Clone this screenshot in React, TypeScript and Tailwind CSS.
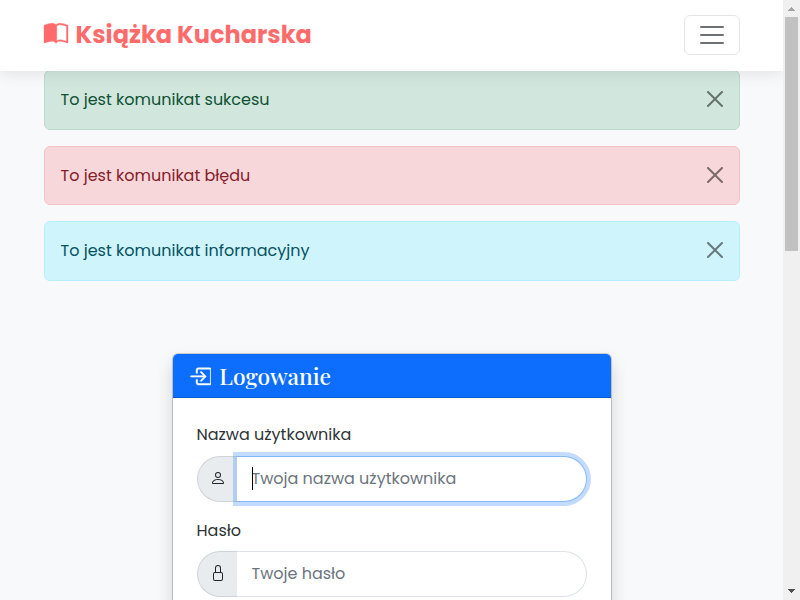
import type { ReactNode } from 'react';
import { BsBookHalf, BsBoxArrowInRight, BsLock, BsPerson } from 'react-icons/bs';

function CloseIcon() {
  return (
    <svg viewBox="0 0 16 16" className="-mt-[2px] h-4 w-4 fill-black opacity-50" aria-label="Zamknij">
      <path d="M.293.293a1 1 0 0 1 1.414 0L8 6.586 14.293.293a1 1 0 1 1 1.414 1.414L9.414 8l6.293 6.293a1 1 0 0 1-1.414 1.414L8 9.414l-6.293 6.293a1 1 0 0 1-1.414-1.414L6.586 8 .293 1.707a1 1 0 0 1 0-1.414z" />
    </svg>
  );
}

function Alert({ tone, children }: { tone: string; children: ReactNode }) {
  return (
    <div className={`mb-4 flex h-[59.6px] items-center justify-between rounded-md border px-4 ${tone}`}>
      <span>{children}</span>
      <CloseIcon />
    </div>
  );
}

function Addon({ children }: { children: ReactNode }) {
  return (
    <span className="flex w-10 shrink-0 items-center justify-center rounded-l-full border border-r-0 border-[#ced4da] bg-[#e9ecef] text-[#212529]">
      {children}
    </span>
  );
}

export default function App() {
  return (
    <div className="flex h-[600px] w-[800px] overflow-hidden bg-[#f8f9fa] font-[Poppins,Inter,sans-serif] text-base leading-[25.6px] text-[#2d3436]">
      <div className="flex w-[783px] flex-col overflow-hidden">
        <header className="relative z-10 flex h-[71px] shrink-0 items-center justify-between bg-white px-[43.5px] pb-[2px] shadow-[0_2px_15px_rgba(0,0,0,0.1)]">
          <div className="flex items-center gap-2 text-2xl font-bold text-[#ff6b6b]">
            <BsBookHalf className="-mt-[2px] h-6 w-6 overflow-visible" strokeWidth="0.25" />
            <span>Książka Kucharska</span>
          </div>
          <button className="flex h-10 w-14 items-center justify-center rounded-md border border-[#e5e5e6]" aria-label="Menu">
            <svg viewBox="0 0 30 30" className="h-[30px] w-[30px]" fill="none" stroke="#212529" strokeOpacity=".65" strokeWidth="2" strokeLinecap="round" strokeMiterlimit="10">
              <path d="M4 7h22M4 15h22M4 23h22" />
            </svg>
          </button>
        </header>
        <main className="-mt-[0.8px] flex flex-col px-[43.5px]">
          <Alert tone="border-[#badbcc] bg-[#d1e7dd] text-[#0f5132]">To jest komunikat sukcesu</Alert>
          <Alert tone="border-[#f5c2c7] bg-[#f8d7da] text-[#842029]">To jest komunikat błędu</Alert>
          <Alert tone="border-[#b6effb] bg-[#cff4fc] text-[#055160]">To jest komunikat informacyjny</Alert>
          <section className="mx-auto mt-14 h-[400px] w-[440px] rounded-md border border-black/[.175] bg-white bg-clip-padding shadow-[0_8px_16px_rgba(0,0,0,0.15)]">
            <div className="flex h-11 items-center gap-2 rounded-t-[5px] border-b border-black/[.175] bg-[#0d6efd] pl-4 text-white">
              <BsBoxArrowInRight className="mt-px h-[22.8px] w-[22.8px]" strokeWidth="0.35" />
              <h1 className="mt-px font-['Playfair_Display','Liberation_Serif',serif] text-[22.8px] font-medium">Logowanie</h1>
            </div>
            <form className="px-6 pt-6">
              <label className="mb-2 block h-[25.6px]">Nazwa użytkownika</label>
              <div className="mb-4 flex h-[46px]">
                <Addon><BsPerson className="ml-px h-4 w-4 -translate-y-px" /></Addon>
                <div className="relative flex flex-1 items-center rounded-r-full border border-l-0 border-[#86b7fe] bg-white pl-[15px] text-[#6c757d] shadow-[0_0_0_4px_rgba(13,110,253,0.25)]">
                  <i className="absolute left-[15px] h-[23px] w-px bg-black" />
                  <span>Twoja nazwa użytkownika</span>
                </div>
              </div>
              <label className="mb-[7.6px] block h-[25.6px]">Hasło</label>
              <div className="flex h-[46px]">
                <Addon><BsLock className="-mt-px ml-px h-4 w-4" /></Addon>
                <div className="flex flex-1 items-center rounded-r-full border border-l-0 border-[#dee2e6] bg-white pl-[15px] text-[#6c757d]">
                  <span>Twoje hasło</span>
                </div>
              </div>
            </form>
          </section>
        </main>
      </div>
      <aside className="flex w-[17px] flex-col items-center bg-[#f0f0f0]">
        <svg viewBox="0 0 17 17" className="h-[17px] w-[17px]" fill="#a3a3a3" shapeRendering="crispEdges"><path d="M8 7h1v1h1v1h1v1h1v1H5v-1h1V9h1V8h1z" /></svg>
        <div className="h-[234px] w-[13px] bg-[#c1c1c1]" />
        <svg viewBox="0 0 17 17" className="mt-auto h-[17px] w-[17px]" fill="#505050" shapeRendering="crispEdges"><path d="M5 6h7v1h-1v1h-1v1H9v1H8V9H7V8H6V7H5z" /></svg>
      </aside>
    </div>
  );
}
